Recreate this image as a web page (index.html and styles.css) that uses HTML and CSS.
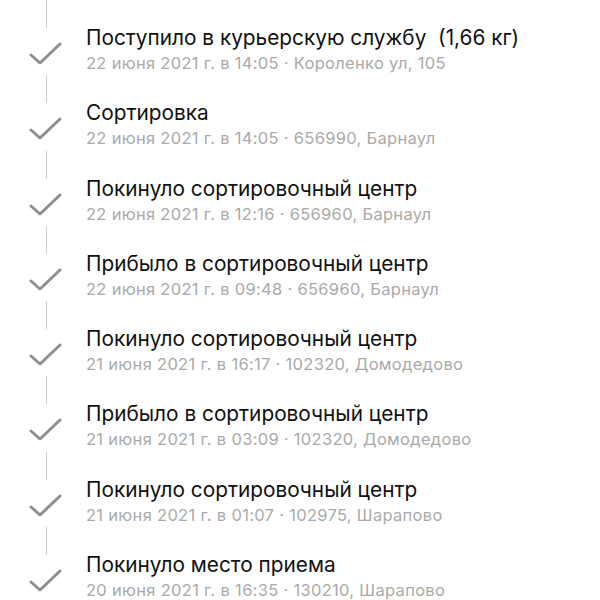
FILE: index.html
```html
<!DOCTYPE html>
<html lang="ru">
<head>
<meta charset="utf-8">
<link rel="stylesheet" href="styles.css">
</head>
<body>
<ul class="track">
  <li class="step">
    <div class="rail"><span class="seg"></span><svg class="check" viewBox="0 0 34 26"><path d="M2 14 L11 22 L31 3"/></svg></div>
    <div class="info"><div class="title">Поступило в курьерскую службу&nbsp; (1,66 кг)</div><div class="meta">22 июня 2021 г. в 14:05 · Короленко ул, 105</div></div>
  </li>
  <li class="step">
    <div class="rail"><span class="seg"></span><svg class="check" viewBox="0 0 34 26"><path d="M2 14 L11 22 L31 3"/></svg></div>
    <div class="info"><div class="title">Сортировка</div><div class="meta">22 июня 2021 г. в 14:05 · 656990, Барнаул</div></div>
  </li>
  <li class="step">
    <div class="rail"><span class="seg"></span><svg class="check" viewBox="0 0 34 26"><path d="M2 14 L11 22 L31 3"/></svg></div>
    <div class="info"><div class="title">Покинуло сортировочный центр</div><div class="meta">22 июня 2021 г. в 12:16 · 656960, Барнаул</div></div>
  </li>
  <li class="step">
    <div class="rail"><span class="seg"></span><svg class="check" viewBox="0 0 34 26"><path d="M2 14 L11 22 L31 3"/></svg></div>
    <div class="info"><div class="title">Прибыло в сортировочный центр</div><div class="meta">22 июня 2021 г. в 09:48 · 656960, Барнаул</div></div>
  </li>
  <li class="step">
    <div class="rail"><span class="seg"></span><svg class="check" viewBox="0 0 34 26"><path d="M2 14 L11 22 L31 3"/></svg></div>
    <div class="info"><div class="title">Покинуло сортировочный центр</div><div class="meta">21 июня 2021 г. в 16:17 · 102320, Домодедово</div></div>
  </li>
  <li class="step">
    <div class="rail"><span class="seg"></span><svg class="check" viewBox="0 0 34 26"><path d="M2 14 L11 22 L31 3"/></svg></div>
    <div class="info"><div class="title">Прибыло в сортировочный центр</div><div class="meta">21 июня 2021 г. в 03:09 · 102320, Домодедово</div></div>
  </li>
  <li class="step">
    <div class="rail"><span class="seg"></span><svg class="check" viewBox="0 0 34 26"><path d="M2 14 L11 22 L31 3"/></svg></div>
    <div class="info"><div class="title">Покинуло сортировочный центр</div><div class="meta">21 июня 2021 г. в 01:07 · 102975, Шарапово</div></div>
  </li>
  <li class="step">
    <div class="rail"><span class="seg"></span><svg class="check" viewBox="0 0 34 26"><path d="M2 14 L11 22 L31 3"/></svg></div>
    <div class="info"><div class="title">Покинуло место приема</div><div class="meta">20 июня 2021 г. в 16:35 · 130210, Шарапово</div></div>
  </li>
</ul>
</body>
</html>
```
FILE: styles.css
```css
html, body {
  margin: 0;
  padding: 0;
  background: #fff;
}
body {
  font-family: Inter, "Noto Sans", sans-serif;
  width: 600px;
  height: 600px;
  overflow: hidden;
}
.track {
  list-style: none;
  margin: 0;
  padding: 0;
}
.step {
  display: flex;
  height: 75.3px;
}
.rail {
  width: 86px;
  flex: none;
  display: flex;
  flex-direction: column;
  align-items: flex-start;
}
.seg {
  display: block;
  width: 1px;
  height: 28px;
  background: #cfcfcf;
  margin-left: 46px;
}
.check {
  width: 34px;
  height: 26px;
  margin-left: 29px;
  margin-top: 13px;
  fill: none;
  stroke: #8f8f8f;
  stroke-width: 3;
  stroke-linecap: round;
  stroke-linejoin: round;
}
.info {
  padding-top: 25px;
}
.title {
  font-size: 20.8px;
  line-height: 25px;
  color: #111;
  white-space: nowrap;
}
.meta {
  font-size: 16.5px;
  line-height: 20px;
  letter-spacing: 0.3px;
  color: #aaaaaa;
  white-space: nowrap;
  margin-top: 3px;
}
```
